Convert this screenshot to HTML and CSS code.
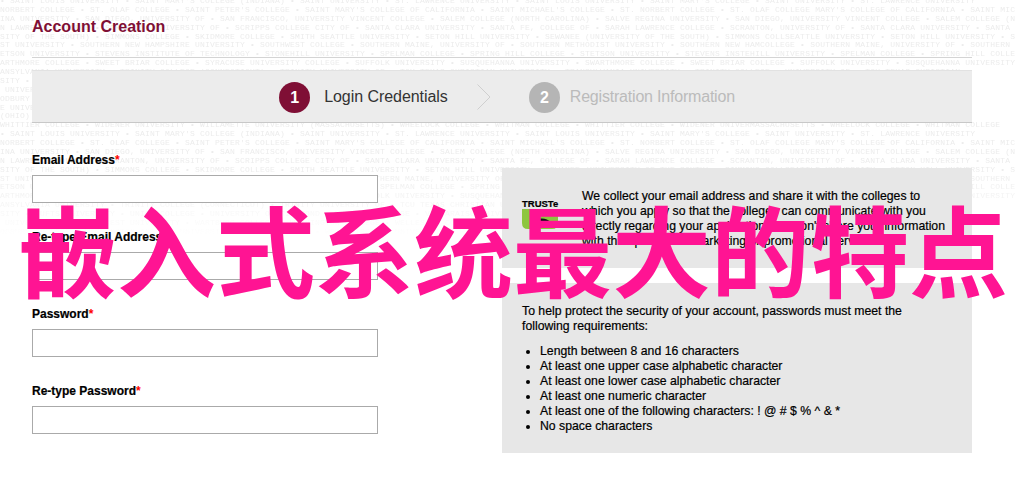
FILE: index.html
```html
<!DOCTYPE html>
<html lang="en">
<head>
<meta charset="UTF-8">
<meta name="viewport" content="width=device-width, initial-scale=1.0">
<title>Account Creation</title>
<link rel="stylesheet" href="styles.css">
</head>
<body>

<div class="college-names" aria-hidden="true">
    <p>&bull; SAINT LOUIS UNIVERSITY &bull; SAINT MARY'S COLLEGE (INDIANA) &bull; SAINT UNIVERSITY &bull; ST. LAWRENCE UNIVERSITY &bull; SAINT LOUIS UNIVERSITY &bull; SAINT MARY'S COLLEGE &bull; SAINT UNIVERSITY &bull; ST. LAWRENCE UNIVERSITY</p>
    <p>NORBERT COLLEGE &bull; ST. OLAF COLLEGE &bull; SAINT PETER'S COLLEGE &bull; SAINT MARY'S COLLEGE OF CALIFORNIA &bull; SAINT MICHAEL'S COLLEGE &bull; ST. NORBERT COLLEGE &bull; ST. OLAF COLLEGE MARY'S COLLEGE OF CALIFORNIA &bull; SAINT MICHAEL'S</p>
    <p>INA UNIVERSITY &bull; SAN DIEGO, UNIVERSITY OF &bull; SAN FRANCISCO, UNIVERSITY VINCENT COLLEGE &bull; SALEM COLLEGE (NORTH CAROLINA) &bull; SALVE REGINA UNIVERSITY &bull; SAN DIEGO, UNIVERSITY VINCENT COLLEGE &bull; SALEM COLLEGE (NORTH CAROLINA)</p>
    <p>N LAWRENCE COLLEGE &bull; SCRANTON, UNIVERSITY OF &bull; SCRIPPS COLLEGE CITY OF &bull; SANTA CLARA UNIVERSITY &bull; SANTA FE, COLLEGE OF &bull; SARAH LAWRENCE COLLEGE &bull; SCRANTON, UNIVERSITY OF &bull; SANTA CLARA UNIVERSITY &bull; SANTA FE, COLLEGE</p>
    <p>SITY OF THE SOUTH) &bull; SIMMONS COLLEGE &bull; SKIDMORE COLLEGE &bull; SMITH SEATTLE UNIVERSITY &bull; SETON HILL UNIVERSITY &bull; SEWANEE (UNIVERSITY OF THE SOUTH) &bull; SIMMONS COLLSEATTLE UNIVERSITY &bull; SETON HILL UNIVERSITY &bull; SEWANEE</p>
    <p>ST UNIVERSITY &bull; SOUTHERN NEW HAMPSHIRE UNIVERSITY &bull; SOUTHWEST COLLEGE &bull; SOUTHERN MAINE, UNIVERSITY OF &bull; SOUTHERN METHODIST UNIVERSITY &bull; SOUTHERN NEW HAMCOLLEGE &bull; SOUTHERN MAINE, UNIVERSITY OF &bull; SOUTHERN</p>
    <p>ETSON UNIVERSITY &bull; STEVENS INSTITUTE OF TECHNOLOGY &bull; STONEHILL UNIVERSITY &bull; SPELMAN COLLEGE &bull; SPRING HILL COLLEGE &bull; STETSON UNIVERSITY &bull; STEVENS INSTEHILL UNIVERSITY &bull; SPELMAN COLLEGE &bull; SPRING HILL COLLEGE</p>
    <p>ARTHMORE COLLEGE &bull; SWEET BRIAR COLLEGE &bull; SYRACUSE UNIVERSITY COLLEGE &bull; SUFFOLK UNIVERSITY &bull; SUSQUEHANNA UNIVERSITY &bull; SWARTHMORE COLLEGE &bull; SWEET BRIAR COLLEGE &bull; SUFFOLK UNIVERSITY &bull; SUSQUEHANNA UNIVERSITY</p>
    <p>ANSYLVANIA UNIVERSITY &bull; TRINITY COLLEGE (CONNECTICUT) &bull; TRINITY UNIVERSITY OF &bull; TCU TEXAS CHRISTIAN UNIVERSITY &bull; TRANSYLVANIA UNIVERSITY &bull; TRINITY COLLEGE &bull; UNIVERSITY OF &bull; TCU TEXAS CHRISTIAN</p>
    <p>SITY &bull; TUFTS UNIVERSITY &bull; UNION COLLEGE &bull; UNIVERSITY OF RICHMOND &bull; URSINUS COLLEGE &bull; VALPARAISO UNIVERSITY &bull; VANDERBILT UNIVERSITY &bull; VASSAR COLLEGE &bull; VILLANOVA UNIVERSITY &bull; UNIVERSITY</p>
    <p>&nbsp;UNIVERSITY &bull; WAKE FOREST UNIVERSITY &bull; WARTBURG COLLEGE &bull; WASHINGTON COLLEGE &bull; WELLESLEY COLLEGE &bull; WESLEYAN UNIVERSITY &bull; WAKE FOREST &bull; WARTBURG COLLEGE &bull; UNIVERSITY</p>
    <p>ODBURY COLLEGE &bull; WASHINGTON AND LEE UNIVERSITY &bull; WELLS COLLEGE &bull; WEST VIRGINIA UNIVERSITY &bull; WHEATON COLLEGE &bull; WILLIAMS COLLEGE &bull; WOFFORD COLLEGE &bull; WESTMONT COLLEGE</p>
    <p>E UNIVERSITY &bull; XAVIER UNIVERSITY &bull; YALE UNIVERSITY &bull; YESHIVA UNIVERSITY &bull; WESTERN COLLEGE &bull; WESTFIELD COLLEGE &bull; WHITWORTH COLLEGE &bull; WILKES COLLEGE &bull; COLLEGE &bull; VILLANOVA</p>
    <p>(OHIO) &bull; WITTENBERG UNIVERSITY &bull; WOOSTER COLLEGE &bull; WORCESTER COLLEGE &bull; WEBSTER UNIVERSITY &bull; WELLESLEY COLLEGE &bull; WHEATON COLLEGE &bull; WESTMINSTER COLLEGE &bull; WESTMINSTER</p>
    <p>WHITTIER COLLEGE &bull; WIDENER UNIVERSITY &bull; WILLAMETTE UNIVERSITY (MASSACHUSETTS) &bull; WHEELOCK COLLEGE &bull; WHITMAN COLLEGE &bull; WHITTIER COLLEGE &bull; WIDENER UNIVERMASSACHUSETTS &bull; WHEELOCK COLLEGE &bull; WHITMAN COLLEGE</p>
    <p>&bull; SAINT LOUIS UNIVERSITY &bull; SAINT MARY'S COLLEGE (INDIANA) &bull; SAINT UNIVERSITY &bull; ST. LAWRENCE UNIVERSITY &bull; SAINT LOUIS UNIVERSITY &bull; SAINT MARY'S COLLEGE &bull; SAINT UNIVERSITY &bull; ST. LAWRENCE UNIVERSITY</p>
    <p>NORBERT COLLEGE &bull; ST. OLAF COLLEGE &bull; SAINT PETER'S COLLEGE &bull; SAINT MARY'S COLLEGE OF CALIFORNIA &bull; SAINT MICHAEL'S COLLEGE &bull; ST. NORBERT COLLEGE &bull; ST. OLAF COLLEGE MARY'S COLLEGE OF CALIFORNIA &bull; SAINT MICHAEL'S</p>
    <p>INA UNIVERSITY &bull; SAN DIEGO, UNIVERSITY OF &bull; SAN FRANCISCO, UNIVERSITY VINCENT COLLEGE &bull; SALEM COLLEGE (NORTH CAROLINA) &bull; SALVE REGINA UNIVERSITY &bull; SAN DIEGO, UNIVERSITY VINCENT COLLEGE &bull; SALEM COLLEGE (NORTH CAROLINA)</p>
    <p>N LAWRENCE COLLEGE &bull; SCRANTON, UNIVERSITY OF &bull; SCRIPPS COLLEGE CITY OF &bull; SANTA CLARA UNIVERSITY &bull; SANTA FE, COLLEGE OF &bull; SARAH LAWRENCE COLLEGE &bull; SCRANTON, UNIVERSITY OF &bull; SANTA CLARA UNIVERSITY &bull; SANTA FE, COLLEGE</p>
    <p>SITY OF THE SOUTH) &bull; SIMMONS COLLEGE &bull; SKIDMORE COLLEGE &bull; SMITH SEATTLE UNIVERSITY &bull; SETON HILL UNIVERSITY &bull; SEWANEE (UNIVERSITY OF THE SOUTH) &bull; SIMMONS COLLSEATTLE UNIVERSITY &bull; SETON HILL UNIVERSITY &bull; SEWANEE</p>
    <p>ST UNIVERSITY &bull; SOUTHERN NEW HAMPSHIRE UNIVERSITY &bull; SOUTHWEST COLLEGE &bull; SOUTHERN MAINE, UNIVERSITY OF &bull; SOUTHERN METHODIST UNIVERSITY &bull; SOUTHERN NEW HAMCOLLEGE &bull; SOUTHERN MAINE, UNIVERSITY OF &bull; SOUTHERN</p>
    <p>ETSON UNIVERSITY &bull; STEVENS INSTITUTE OF TECHNOLOGY &bull; STONEHILL UNIVERSITY &bull; SPELMAN COLLEGE &bull; SPRING HILL COLLEGE &bull; STETSON UNIVERSITY &bull; STEVENS INSTEHILL UNIVERSITY &bull; SPELMAN COLLEGE &bull; SPRING HILL COLLEGE</p>
    <p>ARTHMORE COLLEGE &bull; SWEET BRIAR COLLEGE &bull; SYRACUSE UNIVERSITY COLLEGE &bull; SUFFOLK UNIVERSITY &bull; SUSQUEHANNA UNIVERSITY &bull; SWARTHMORE COLLEGE &bull; SWEET BRIAR COLLEGE &bull; SUFFOLK UNIVERSITY &bull; SUSQUEHANNA UNIVERSITY</p>
    <p>ANSYLVANIA UNIVERSITY &bull; TRINITY COLLEGE (CONNECTICUT) &bull; TRINITY UNIVERSITY OF &bull; TCU TEXAS CHRISTIAN UNIVERSITY &bull; TRANSYLVANIA UNIVERSITY &bull; TRINITY COLLEGE &bull; UNIVERSITY OF &bull; TCU TEXAS CHRISTIAN</p>
    <p>SITY &bull; TUFTS UNIVERSITY &bull; UNION COLLEGE &bull; UNIVERSITY OF RICHMOND &bull; URSINUS COLLEGE &bull; VALPARAISO UNIVERSITY &bull; VANDERBILT UNIVERSITY &bull; VASSAR COLLEGE &bull; VILLANOVA UNIVERSITY &bull; UNIVERSITY</p>
    <p>&nbsp;UNIVERSITY &bull; WAKE FOREST UNIVERSITY &bull; WARTBURG COLLEGE &bull; WASHINGTON COLLEGE &bull; WELLESLEY COLLEGE &bull; WESLEYAN UNIVERSITY &bull; WAKE FOREST &bull; WARTBURG COLLEGE &bull; UNIVERSITY</p>
    <p>ODBURY COLLEGE &bull; WASHINGTON AND LEE UNIVERSITY &bull; WELLS COLLEGE &bull; WEST VIRGINIA UNIVERSITY &bull; WHEATON COLLEGE &bull; WILLIAMS COLLEGE &bull; WOFFORD COLLEGE &bull; WESTMONT COLLEGE</p>
</div>

<div class="container">
    <h1>Account Creation</h1>

    <div class="steps">
        <div class="step active">
            <span class="step-num">1</span>
            <span class="step-name">Login Credentials</span>
        </div>
        <svg class="step-arrow" width="14" height="26" viewBox="0 0 14 26">
            <path d="M0.5 0.5 L13 13 L0.5 25.5" fill="none" stroke="#cfcfcf" stroke-width="1"/>
        </svg>
        <div class="step">
            <span class="step-num">2</span>
            <span class="step-name">Registration Information</span>
        </div>
    </div>

    <div class="content">
        <form class="fields">
            <label for="email">Email Address<span class="req">*</span></label>
            <input type="text" id="email">

            <label for="email2">Re-type Email Address<span class="req">*</span></label>
            <input type="text" id="email2">

            <label for="password">Password<span class="req">*</span></label>
            <input type="password" id="password">

            <label for="password2">Re-type Password<span class="req">*</span></label>
            <input type="password" id="password2">
        </form>

        <div class="info">
            <div class="info-box privacy">
                <div class="truste">
                    <span class="truste-name">TRUSTe</span>
                    <svg width="36" height="20" viewBox="0 0 36 20">
                        <path d="M0 0 H36 V14 Q36 20 30 20 H6 Q0 20 0 14 Z" fill="#8dc63f"/>
                        <path d="M14 11 Q22 7 30 14 Q22 11 16 14 Z" fill="#111"/>
                    </svg>
                </div>
                <p>We collect your email address and share it with the colleges to which you apply so that the colleges can communicate with you directly regarding your application. We don't share your information with third parties for marketing or promotional services.</p>
            </div>
            <div class="info-box rules">
                <p>To help protect the security of your account, passwords must meet the following requirements:</p>
                <ul>
                    <li>Length between 8 and 16 characters</li>
                    <li>At least one upper case alphabetic character</li>
                    <li>At least one lower case alphabetic character</li>
                    <li>At least one numeric character</li>
                    <li>At least one of the following characters: ! @ # $ % ^ &amp; *</li>
                    <li>No space characters</li>
                </ul>
            </div>
        </div>
    </div>
</div>

<div class="banner">嵌入式系统最大的特点</div>

</body>
</html>
```

FILE: styles.css
```css
body {
    font-family: "Liberation Sans", Arial, sans-serif;
    margin: 0;
    padding: 0;
    background-color: #fff;
    color: #000;
    height: 482px;
    overflow: hidden;
}
.college-names {
    position: absolute;
    top: -3px;
    left: 0;
    width: 1015px;
    height: 240px;
    overflow: hidden;
    font-family: "Liberation Mono", monospace;
    font-size: 8px;
    letter-spacing: 0.2px;
    line-height: 8.87px;
    color: #ececec;
    -webkit-mask-image: linear-gradient(to bottom, #000 170px, transparent 240px);
    mask-image: linear-gradient(to bottom, #000 170px, transparent 240px);
}
.college-names p {
    margin: 0;
    white-space: nowrap;
}
.container {
    position: relative;
    width: 940px;
    margin: 0 32px;
}
h1 {
    margin: 0;
    height: 58px;
    padding-top: 18px;
    box-sizing: border-box;
    border-bottom: 1px solid #d4d4d4;
    font-size: 16px;
    line-height: 18px;
    color: #7f0f35;
}
.steps {
    display: flex;
    align-items: center;
    justify-content: center;
    height: 53px;
    box-sizing: border-box;
    margin-top: 12px;
    padding: 1px 0 0 10px;
    background-color: #ececec;
    border-top: 1px solid #e2e2e2;
    border-bottom: 1px solid #c8c8c8;
}
.step {
    display: flex;
    align-items: center;
    gap: 10px;
    font-size: 16px;
    letter-spacing: -0.2px;
    color: #bbb;
}
.step.active {
    gap: 14px;
    letter-spacing: -0.05px;
    color: #333;
}
.step-num {
    width: 31px;
    height: 31px;
    border-radius: 50%;
    background-color: #b5b5b5;
    color: #fff;
    font-weight: bold;
    text-align: center;
    line-height: 31px;
}
.active .step-num {
    background-color: #7f0f35;
}
.step-arrow {
    margin: 0 38px 0 29px;
}
.content {
    display: grid;
    grid-template-columns: 346px 470px;
    column-gap: 124px;
    padding-top: 29px;
}
label {
    display: block;
    padding-top: 1px;
    font-size: 12px;
    font-weight: bold;
    line-height: 15px;
    margin-bottom: 7px;
    -webkit-text-stroke: 0.2px #000;
}
.req {
    color: #f00;
    -webkit-text-stroke: 0;
}
input {
    display: block;
    width: 100%;
    height: 28px;
    box-sizing: border-box;
    margin: 0 0 26px 0;
    border: 1px solid #aaa;
    background-color: #fff;
}
.info {
    margin-top: 16px;
    font-size: 12.25px;
    line-height: 15px;
    -webkit-text-stroke: 0.2px #000;
}
.info-box {
    background-color: #e7e7e7;
    padding: 21px 22px 0 20px;
}
.info-box p {
    margin: 0;
}
.privacy {
    display: flex;
    height: 100px;
    box-sizing: border-box;
    margin-bottom: 15px;
}
.truste {
    flex: none;
    width: 36px;
    margin: 10px 24px 0 0;
    line-height: 0;
}
.truste-name {
    display: block;
    height: 10px;
    font-size: 9.5px;
    font-weight: bold;
    line-height: 10px;
    white-space: nowrap;
}
.rules {
    height: 170px;
    box-sizing: border-box;
}
.rules ul {
    margin: 10px 0 0 0;
    padding: 0 0 0 18px;
}
.banner {
    position: absolute;
    top: 188px;
    left: 18px;
    width: 995px;
    white-space: nowrap;
    font-family: "Noto Sans CJK SC", sans-serif;
    font-size: 99px;
    font-weight: bold;
    line-height: 118px;
    color: #ff1493;
}
```
